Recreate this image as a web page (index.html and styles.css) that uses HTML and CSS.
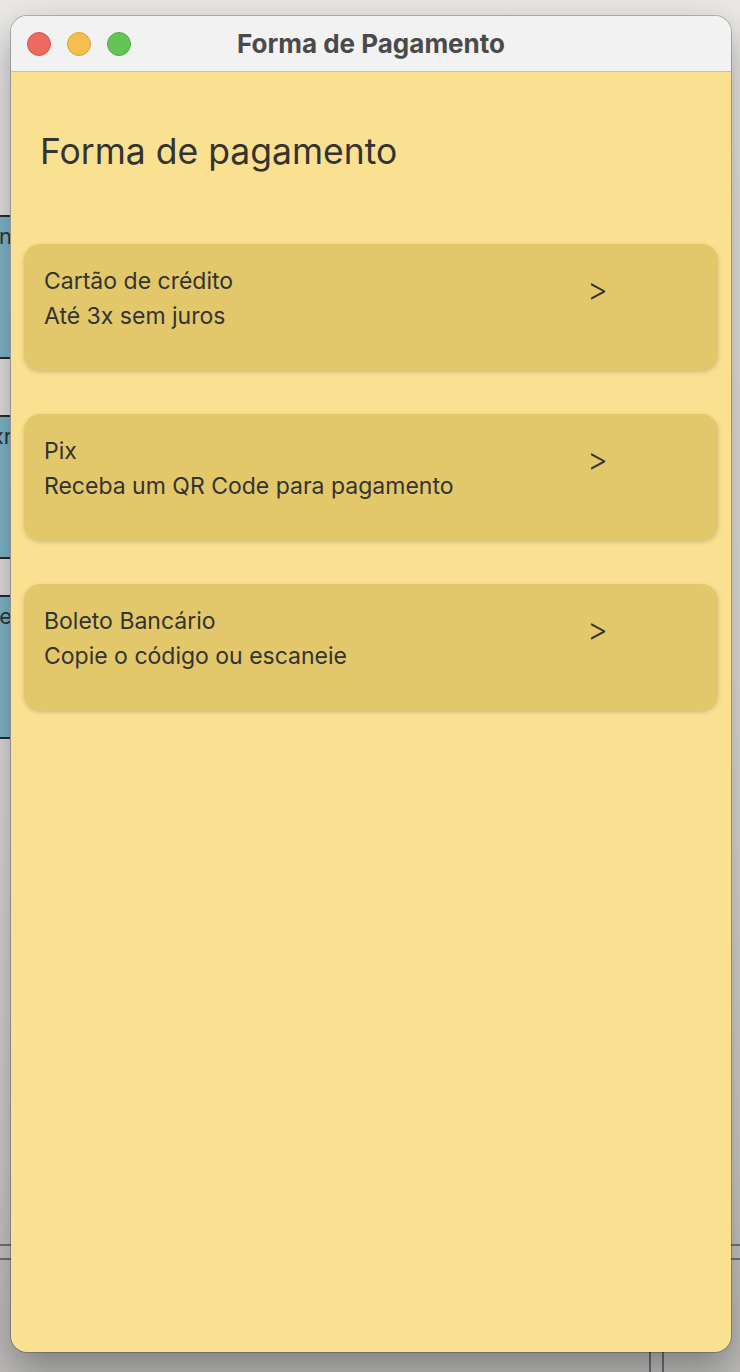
FILE: index.html
```html
<!DOCTYPE html>
<html lang="pt">
<head>
<meta charset="utf-8">
<title>Forma de Pagamento</title>
<link rel="stylesheet" href="styles.css">
</head>
<body>
<div class="desktop">
  <div class="behind">
    <div class="bg-box b1"><span>n</span></div>
    <div class="bg-box b2"><span>xr</span></div>
    <div class="bg-box b3"><span>re</span></div>
    <div class="bg-hline h1"></div>
    <div class="bg-hline h2"></div>
    <div class="bg-vline v1"></div>
    <div class="bg-vline v2"></div>
  </div>
  <div class="window">
    <div class="titlebar">
      <div class="lights">
        <span class="light red"></span>
        <span class="light yellow"></span>
        <span class="light green"></span>
      </div>
      <div class="title">Forma de Pagamento</div>
    </div>
    <div class="content">
      <h1 class="heading">Forma de pagamento</h1>
      <div class="cards">
        <div class="card">
          <div class="card-text">
            <div>Cartão de crédito</div>
            <div>Até 3x sem juros</div>
          </div>
          <div class="chev">&gt;</div>
        </div>
        <div class="card">
          <div class="card-text">
            <div>Pix</div>
            <div>Receba um QR Code para pagamento</div>
          </div>
          <div class="chev">&gt;</div>
        </div>
        <div class="card">
          <div class="card-text">
            <div>Boleto Bancário</div>
            <div>Copie o código ou escaneie</div>
          </div>
          <div class="chev">&gt;</div>
        </div>
      </div>
    </div>
  </div>
</div>
</body>
</html>
```
FILE: styles.css
```css
html, body {
  margin: 0;
  padding: 0;
}
body {
  width: 740px;
  height: 1372px;
  overflow: hidden;
  font-family: Inter, "Noto Sans", "Liberation Sans", sans-serif;
}
.desktop {
  position: relative;
  width: 740px;
  height: 1372px;
  background: linear-gradient(180deg, #eae9e7 0%, #e2e1df 50%, #cfcecc 85%, #bdbcba 100%);
  padding: 16px 9px 0 11px;
  box-sizing: border-box;
}
.behind {
  position: absolute;
  inset: 0;
}
.bg-box {
  position: absolute;
  left: -30px;
  width: 40px;
  height: 144px;
  background: #7fb9cd;
  border-top: 2px solid #2b2b2b;
  border-bottom: 2px solid #2b2b2b;
  box-sizing: border-box;
  overflow: hidden;
  font-size: 22px;
  color: #333;
  line-height: 1;
}
.bg-box span {
  position: absolute;
  right: -2px;
  top: 8px;
  white-space: nowrap;
}
.b1 { top: 215px; }
.b2 { top: 415px; }
.b3 { top: 595px; }
.bg-hline {
  position: absolute;
  left: 0;
  width: 740px;
  height: 2px;
  background: #767676;
}
.h1 { top: 1244px; }
.h2 { top: 1258px; }
.bg-vline {
  position: absolute;
  top: 1240px;
  width: 2px;
  height: 140px;
  background: #6e6e6e;
}
.v1 { left: 649px; }
.v2 { left: 662px; }
.window {
  position: relative;
  width: 720px;
  height: 1336px;
  border-radius: 16px;
  overflow: hidden;
  background: #fae192;
  box-shadow: 0 0 0 1px rgba(0,0,0,0.22), 0 16px 40px rgba(0,0,0,0.35);
  display: flex;
  flex-direction: column;
}
.titlebar {
  height: 56px;
  flex: none;
  background: #f2f2f2;
  border-bottom: 1px solid #dfc264;
  box-sizing: border-box;
  display: flex;
  align-items: center;
  position: relative;
}
.lights {
  display: flex;
  gap: 16px;
  padding-left: 16px;
}
.light {
  width: 24px;
  height: 24px;
  border-radius: 50%;
  box-sizing: border-box;
}
.red { background: #ee6a5f; border: 1px solid #d6564c; }
.yellow { background: #f5be4f; border: 1px solid #d9a33b; }
.green { background: #62c554; border: 1px solid #4ead41; }
.title {
  position: absolute;
  left: 0;
  right: 0;
  text-align: center;
  font-weight: 700;
  font-size: 26px;
  color: #4a4a4a;
  letter-spacing: 0;
}
.content {
  flex: 1;
  padding: 58px 13px 0 13px;
}
.heading {
  margin: 0 0 0 16px;
  font-weight: 400;
  font-size: 35.5px;
  line-height: 44px;
  color: #333333;
}
.cards {
  margin-top: 70px;
  display: flex;
  flex-direction: column;
  gap: 44px;
}
.card {
  height: 126px;
  box-sizing: border-box;
  background: #e2c86a;
  border-radius: 16px;
  box-shadow: 0 2px 5px rgba(0,0,0,0.18);
  display: flex;
  padding: 20px 0 0 20px;
  color: #333333;
}
.card-text {
  width: 543px;
  font-size: 23px;
  line-height: 35px;
}
.chev {
  font-size: 32px;
  font-weight: 300;
  line-height: 32px;
  margin-top: 10px;
}
```
